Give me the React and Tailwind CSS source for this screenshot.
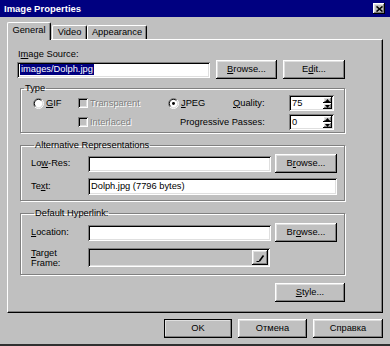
const raised =
  "bg-[#c0c0c0] shadow-[inset_-1px_-1px_0_#000,inset_1px_1px_0_#fff,inset_-2px_-2px_0_#808080,inset_2px_2px_0_#dfdfdf]";
const sunken =
  "shadow-[inset_1px_1px_0_#808080,inset_-1px_-1px_0_#fff,inset_2px_2px_0_#000,inset_-2px_-2px_0_#dfdfdf]";

const Btn = ({ children, className = "", def }) => (
  <div
    className={`h-[19px] flex items-center justify-center ${raised} ${
      def ? "outline outline-1 outline-black -outline-offset-1" : ""
    } ${className}`}
  >
    <span>{children}</span>
  </div>
);

const Field = ({ children, className = "", gray }) => (
  <div
    className={`flex items-center px-[3px] ${gray ? "bg-[#c0c0c0]" : "bg-white"} ${sunken} ${className}`}
  >
    {children}
  </div>
);

const Radio = ({ on }) => (
  <svg width="11" height="11" viewBox="0 0 12 12" className="shrink-0">
    <circle cx="6" cy="6" r="4.5" fill="#fff" />
    <path d="M2.1 9.9A5.5 5.5 0 0 1 9.9 2.1" fill="none" stroke="#808080" />
    <path d="M9.9 2.1A5.5 5.5 0 0 1 2.1 9.9" fill="none" stroke="#fff" />
    <path d="M2.8 9.2A4.5 4.5 0 0 1 9.2 2.8" fill="none" stroke="#000" />
    <path d="M9.2 2.8A4.5 4.5 0 0 1 2.8 9.2" fill="none" stroke="#dfdfdf" />
    {on && <circle cx="6" cy="6" r="1.6" fill="#000" />}
  </svg>
);

const Check = () => <div className={`w-[10px] h-[10px] shrink-0 bg-[#c0c0c0] ${sunken}`} />;

const Spin = ({ value }) => (
  <div className={`w-[45px] h-[16px] flex bg-white ${sunken} p-[2px]`}>
    <span className="flex-1 pl-[1px] leading-[12px]">{value}</span>
    <div className="flex flex-col w-[9px]">
      {[0, 1].map((i) => (
        <div key={i} className={`flex-1 flex items-center justify-center ${raised}`}>
          <svg width="5" height="3" viewBox="0 0 5 3">
            <path d={i === 0 ? "M0 3L2.5 0L5 3Z" : "M0 0L2.5 3L5 0Z"} fill="#000" />
          </svg>
        </div>
      ))}
    </div>
  </div>
);

const Group = ({ title, children, className = "" }) => (
  <fieldset
    className={`w-[325px] ml-[2px] border border-[#808080] shadow-[1px_1px_0_#fff,inset_1px_1px_0_#fff] ${className}`}
  >
    <legend className="ml-[3px] px-[1px] leading-[11px]">{title}</legend>
    {children}
  </fieldset>
);

const dim = "text-[#808080] [text-shadow:1px_1px_0_#fff]";

export default function App() {
  return (
    <div className="w-[390px] h-[346px] bg-[#c0c0c0] flex flex-col font-['Liberation_Sans',Arial,sans-serif] text-[9.3px] leading-[11px] text-black overflow-hidden border-b-2 border-b-[#303030]">
      {/* title bar */}
      <div className="h-[17px] bg-[#000080] flex items-center justify-between pl-[4px] pr-[5px]">
        <span className="text-white font-bold text-[9.5px]">Image Properties</span>
        <div className={`w-[12px] h-[11px] flex items-center justify-center ${raised}`}>
          <svg width="7" height="6" viewBox="0 0 7 6">
            <path d="M0.5 0.5L6.5 5.5M6.5 0.5L0.5 5.5" stroke="#000" strokeWidth="1.6" />
          </svg>
        </div>
      </div>

      {/* tabs */}
      <div className="mt-[5px] h-[17px] pl-[7px] flex items-end">
        <div className="relative z-10 w-[44px] h-[18px] -mb-[1px] bg-[#c0c0c0] border-l border-t border-white border-r border-r-black rounded-t-[2px] shadow-[inset_-1px_0_0_#808080] flex items-center justify-center pb-[2px]">
          General
        </div>
        <div className="ml-[1px] w-[35px] h-[14px] border-l border-t border-white border-r border-r-black rounded-t-[2px] shadow-[inset_-1px_0_0_#808080] flex items-center justify-center">
          Video
        </div>
        <div className="w-[60px] h-[14px] border-l border-t border-white border-r border-r-black rounded-t-[2px] shadow-[inset_-1px_0_0_#808080] flex items-center justify-center">
          Appearance
        </div>
      </div>

      {/* panel */}
      <div className="ml-[7px] w-[376px] h-[274px] border border-t-white border-l-white border-r-black border-b-black shadow-[inset_-1px_-1px_0_#808080] pl-[10px] pt-[9px] flex flex-col">
        <div>
          I<u>m</u>age Source:
        </div>
        <div className="flex items-center h-[19px]">
          <Field className="w-[193px] h-[16px] -ml-[1px]">
            <span className="bg-[#000080] text-white px-[1px]">images/Dolph.jpg</span>
          </Field>
          <Btn className="ml-[6px] w-[61px]">
            <u>B</u>rowse...
          </Btn>
          <Btn className="ml-[6px] w-[62px]">
            E<u>d</u>it...
          </Btn>
        </div>

        <Group title="Type" className="mt-[4px] pt-[1px] pb-[2px]">
          <div className="flex items-center h-[16px] pl-[12px]">
            <div className="w-[45px] flex items-center gap-[2px]">
              <Radio />
              <span>
                <u>G</u>IF
              </span>
            </div>
            <div className="w-[90px] flex items-center gap-[2px]">
              <Check />
              <span className={dim}>Transparent</span>
            </div>
            <div className="w-[65px] flex items-center gap-[2px]">
              <Radio on />
              <span>
                <u>J</u>PEG
              </span>
            </div>
            <div className="w-[56px]">
              <u>Q</u>uality:
            </div>
            <Spin value="75" />
          </div>
          <div className="flex items-center h-[16px] mt-[3px] pl-[12px]">
            <div className="w-[45px]" />
            <div className="w-[102px] flex items-center gap-[2px]">
              <Check />
              <span className={dim}>Interlaced</span>
            </div>
            <div className="w-[109px]">Progressive Passes:</div>
            <Spin value="0" />
          </div>
        </Group>

        <Group title="Alternative Representations" className="mt-[7px] pt-[3px] pb-[5px] pl-[10px]">
          <div className="flex items-center h-[19px]">
            <div className="w-[57px]">
              Lo<u>w</u>-Res:
            </div>
            <Field className="w-[183px] h-[16px]" />
            <Btn className="ml-[4px] w-[62px]">
              B<u>r</u>owse...
            </Btn>
          </div>
          <div className="flex items-center h-[17px] mt-[5px]">
            <div className="w-[57px]">
              Te<u>x</u>t:
            </div>
            <Field className="w-[249px] h-[17px]">Dolph.jpg (7796 bytes)</Field>
          </div>
        </Group>

        <Group title="Default Hyperlink:" className="mt-[7px] pt-[4px] pb-[7px] pl-[10px]">
          <div className="flex items-center h-[19px]">
            <div className="w-[57px]">
              <u>L</u>ocation:
            </div>
            <Field className="w-[183px] h-[16px]" />
            <Btn className="ml-[4px] w-[62px]">
              Br<u>o</u>wse...
            </Btn>
          </div>
          <div className="flex items-center h-[19px] mt-[6px]">
            <div className="w-[57px] leading-[10px]">
              <u>T</u>arget
              <br />
              Frame:
            </div>
            <div className={`w-[182px] h-[19px] flex justify-end bg-[#c0c0c0] ${sunken} p-[2px]`}>
              <div className={`w-[16px] h-full flex items-center justify-center ${raised}`}>
                <svg width="10" height="10" viewBox="0 0 10 10">
                  <path d="M4.5 8L8.5 2.5" stroke="#000" strokeWidth="1.6" />
                  <path d="M1.5 8.5H4.5" stroke="#000" strokeWidth="1" />
                </svg>
              </div>
            </div>
          </div>
        </Group>

        <div className="w-[327px] flex justify-end mt-[8px]">
          <Btn className="w-[70px]">
            <u>S</u>tyle...
          </Btn>
        </div>
      </div>

      {/* bottom buttons */}
      <div className="mt-[6px] flex justify-end gap-[6px] pr-[7px]">
        <Btn className="w-[68px]" def>
          OK
        </Btn>
        <Btn className="w-[69px]">Отмена</Btn>
        <Btn className="w-[70px]">Справка</Btn>
      </div>
    </div>
  );
}
